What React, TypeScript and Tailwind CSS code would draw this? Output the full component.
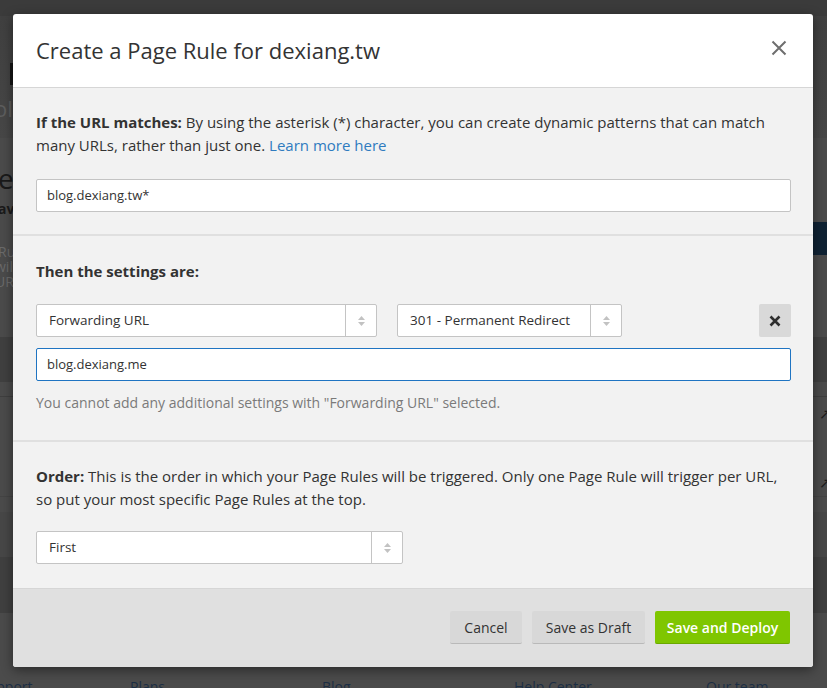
import React from "react";

const font = { fontFamily: '"Open Sans", "Liberation Sans", sans-serif' };

function Arrows() {
  return (
    <div className="flex w-[31px] shrink-0 items-center justify-center border-l border-[#c4c4c4]">
      <svg width="9" height="14" viewBox="0 0 9 14">
        <path d="M4.5 2 L8 6 L1 6 Z" fill="#c2c2c2" />
        <path d="M4.5 12 L8 8 L1 8 Z" fill="#c2c2c2" />
      </svg>
    </div>
  );
}

function Select({ label, w }: { label: string; w: string }) {
  return (
    <div className={`flex h-[33px] ${w} rounded-[2px] border border-[#c4c4c4] bg-white`}>
      <div className="flex flex-1 items-center pl-[12px] text-[13.5px] text-[#333]">{label}</div>
      <Arrows />
    </div>
  );
}

function Background() {
  return (
    <div className="flex h-[688px] w-[827px] flex-col overflow-hidden bg-[#4b4b4b]">
      <div className="h-[16px] shrink-0 bg-[#3b3b3b]" />
      <div className="h-[122px] shrink-0 bg-gradient-to-b from-[#404040] to-[#474747] pl-[10px] pt-[47px]">
        <div className="h-[22px] w-[3px] bg-[#151515]" />
        <div className="-ml-[16px] mt-[12px] text-[22px] leading-[22px] text-[#5e5e5e]">ol</div>
      </div>
      <div className="flex h-[199px] shrink-0 justify-between">
        <div className="-ml-[2px] pt-[26px] text-[#1a1a1a]">
          <div className="text-[28px] leading-[28px]">e</div>
          <div className="mt-[10px] text-[14px] font-bold leading-[14px]">av</div>
          <div className="mt-[28px] text-[14px] leading-[15px] text-[#6a6a6a]">
            <div>Ru</div>
            <div className="-ml-[3px]">will</div>
            <div className="-ml-[3px]">UR</div>
          </div>
        </div>
        <div className="mt-[84px] h-[33px] w-[14px] bg-[#0f2233]" />
      </div>
      <div className="h-[45px] shrink-0 bg-[#404040]" />
      <div className="h-[15px] shrink-0 border-b border-[#3f3f3f]" />
      <div className="flex h-[100px] shrink-0 flex-col items-end border-b border-[#444] pt-[6px] text-[14px] text-[#1a1a1a]">
        <div className="-mr-[4px]">↗</div>
        <div className="-mr-[4px] mt-[48px]">↗</div>
      </div>
      <div className="h-[15px] shrink-0" />
      <div className="h-[45px] shrink-0 bg-[#474747]" />
      <div className="h-[56px] shrink-0 bg-[#404040]" />
      <div className="flex-1" />
      <div className="-ml-[20px] flex h-[10px] shrink-0 text-[14px] leading-[18px] text-[#1c2e44]">
        <div className="w-[150px] shrink-0">Support</div>
        {["Plans", "Blog", "Help Center", "Our team"].map((t) => (
          <div key={t} className="w-[192px] shrink-0">
            {t}
          </div>
        ))}
      </div>
    </div>
  );
}

export default function App() {
  return (
    <div className="relative h-[688px] w-[827px] overflow-hidden" style={font}>
      <Background />
      <div className="absolute left-[13px] top-[14px] w-[800px] overflow-hidden rounded-[3px] bg-white shadow-[0_3px_12px_rgba(0,0,0,0.45)]">
        <div className="flex h-[74px] items-center justify-between border-b border-[#d6d6d6] pl-[23px] pr-[26px]">
          <div className="text-[22px] text-[#333]">Create a Page Rule for dexiang.tw</div>
          <svg width="16" height="16" viewBox="0 0 16 16" className="mb-[5px]">
            <path d="M1.5 1.5 L14.5 14.5 M14.5 1.5 L1.5 14.5" stroke="#6e6e6e" strokeWidth="2" />
          </svg>
        </div>

        <div className="border-b-2 border-[#e0e0e0] bg-[#f2f2f2] pb-[22px] pl-[23px] pr-[22px] pt-[23px]">
          <p className="text-[15px] leading-[23px] text-[#333]">
            <span className="font-bold">If the URL matches:</span> By using the asterisk (*) character, you can
            create dynamic patterns that can match many URLs, rather than just one.{" "}
            <span className="text-[#2f7bbf]">Learn more here</span>
          </p>
          <div className="mt-[22px] flex h-[33px] items-center rounded-[2px] border border-[#c4c4c4] bg-white pl-[10px] text-[13px] text-[#333]">
            blog.dexiang.tw*
          </div>
        </div>

        <div className="border-b-2 border-[#e0e0e0] bg-[#f2f2f2] pb-[26px] pl-[23px] pr-[22px] pt-[24px]">
          <p className="text-[15px] font-bold leading-[23px] text-[#333]">Then the settings are:</p>
          <div className="mt-[21px] flex items-center">
            <Select label="Forwarding URL" w="w-[341px]" />
            <div className="ml-[20px]">
              <Select label="301 - Permanent Redirect" w="w-[225px]" />
            </div>
            <div className="flex-1" />
            <div className="flex h-[33px] w-[32px] items-center justify-center rounded-[2px] bg-[#d9d9d9]">
              <svg width="12" height="12" viewBox="0 0 12 12">
                <path d="M1.5 1.5 L10.5 10.5 M10.5 1.5 L1.5 10.5" stroke="#2e2e2e" strokeWidth="2.6" />
              </svg>
            </div>
          </div>
          <div className="mt-[11px] flex h-[33px] items-center rounded-[2px] border border-[#1f74c2] bg-white pl-[10px] text-[13px] text-[#333]">
            blog.dexiang.me
          </div>
          <p className="mt-[11px] text-[14px] leading-[22px] text-[#7a7a7a]">
            You cannot add any additional settings with "Forwarding URL" selected.
          </p>
        </div>

        <div className="bg-[#f2f2f2] pb-[24px] pl-[23px] pr-[22px] pt-[23px]">
          <p className="text-[15px] leading-[23px] text-[#333]">
            <span className="font-bold">Order:</span> This is the order in which your Page Rules will be triggered.
            Only one Page Rule will trigger per URL, so put your most specific Page Rules at the top.
          </p>
          <div className="mt-[20px]">
            <Select label="First" w="w-[367px]" />
          </div>
        </div>

        <div className="flex justify-end gap-[10px] border-t border-[#d6d6d6] bg-[#e0e0e0] pb-[23px] pr-[23px] pt-[22px]">
          <div className="flex h-[33px] w-[72px] items-center justify-center rounded-[2px] border-b border-[#b9b9b9] bg-[#d8d8d8] text-[14px] text-[#333]">
            Cancel
          </div>
          <div className="flex h-[33px] w-[113px] items-center justify-center rounded-[2px] border-b border-[#b9b9b9] bg-[#d8d8d8] text-[14px] text-[#333]">
            Save as Draft
          </div>
          <div className="flex h-[33px] w-[135px] items-center justify-center rounded-[2px] border-b border-[#6aa800] bg-[#7fc600] text-[14px] font-semibold text-white">
            Save and Deploy
          </div>
        </div>
      </div>
    </div>
  );
}
